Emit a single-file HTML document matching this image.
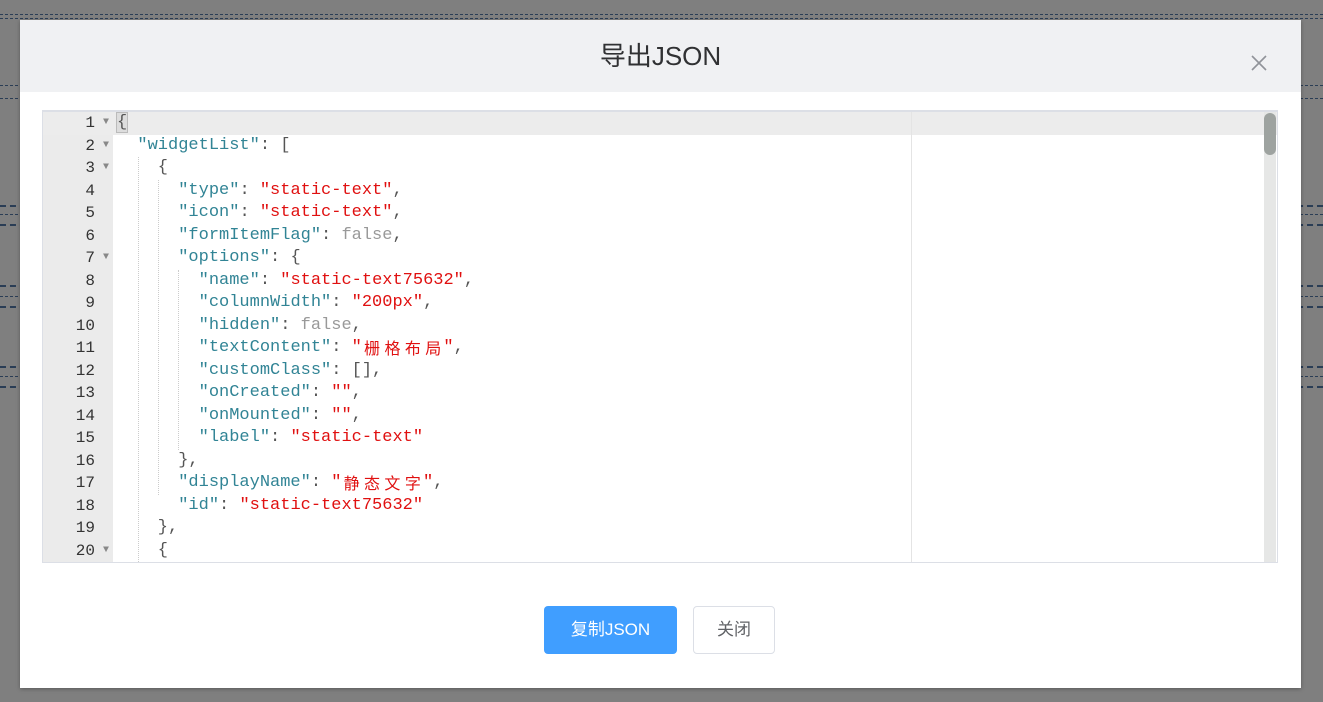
<!DOCTYPE html>
<html><head><meta charset="utf-8"><style>
*{margin:0;padding:0;box-sizing:border-box}
body{width:1323px;height:702px;overflow:hidden;background:#7f7f7f;font-family:"Liberation Sans","Noto Sans CJK SC",sans-serif;position:relative}
.dl{position:absolute;left:0;right:0;height:0;border-top:1px dashed #2a3d55}
.dlg{position:absolute;left:20px;top:20px;width:1281px;height:668px;background:#fff;box-shadow:0 1px 4px rgba(0,0,0,.3)}
.hd{height:72px;background:#f0f1f3;text-align:center;font-size:26px;color:#303133;line-height:72px;padding-top:0}
.x{position:absolute;left:1230px;top:34px;width:18px;height:18px}
.ed{position:absolute;left:22px;top:90px;width:1236px;height:453px;border:1px solid #dcdfe6;border-top:2px solid #dcdfe6;overflow:hidden;background:#fff}
.gut{position:absolute;left:0;top:0;width:70px;height:100%;background:#ebebeb}
.act{position:absolute;left:0;top:0;width:1236px;height:22.5px;background:#ececec}
.pm{position:absolute;left:868px;top:0;width:1px;height:100%;background:#e4e4e4}
.sb{position:absolute;left:1221px;top:0;width:12px;height:100%;background:#e6e7e6}
.th{position:absolute;left:1221px;top:1px;width:12px;height:42px;background:#9ea3a0;border-radius:6px}
.code{position:absolute;left:0;top:0;width:860px;font-family:"Liberation Mono","DejaVu Sans Mono",monospace;font-size:17px;color:#555}
.l{height:22.5px;white-space:pre;position:relative}
.n{position:absolute;left:0;top:0;line-height:22.5px;width:52px;text-align:right;color:#333;font-size:16px}
.f{position:absolute;left:60px;top:0;line-height:22.5px;color:#888;font-size:10px}
.t{position:absolute;left:74px;top:0;line-height:22.5px}
.k{color:#318495}.s{color:#e01010}.b{color:#999}
.c{display:inline-block;width:20.4px;text-align:center;font-family:"Noto Sans CJK SC",sans-serif;font-size:16px;line-height:21px;height:21px;vertical-align:top}
.g{position:absolute;width:0;border-left:1px dotted #ccc}
.btn{position:absolute;top:586px;height:48px;border-radius:4px;font-size:17px;text-align:center;line-height:46px}
</style></head><body>
<div class="dl" style="top:14px"></div><div class="dl" style="top:18px;border-top-style:dashed"></div>
<div class="dl" style="top:85px"></div><div class="dl" style="top:98px"></div>
<div class="dl" style="top:205px;border-top:2px dashed #2a3d55"></div><div class="dl" style="top:214px"></div><div class="dl" style="top:224px;border-top:2px dashed #2a3d55"></div>
<div class="dl" style="top:285px;border-top:2px dashed #2a3d55"></div><div class="dl" style="top:296px"></div><div class="dl" style="top:306px;border-top:2px dashed #2a3d55"></div>
<div class="dl" style="top:366px;border-top:2px dashed #2a3d55"></div><div class="dl" style="top:376px"></div><div class="dl" style="top:386px;border-top:2px dashed #2a3d55"></div>
<div class="dlg">
<div class="hd">导出JSON</div>
<svg class="x" viewBox="0 0 18 18"><path d="M2 2L16 16M16 2L2 16" stroke="#909399" stroke-width="1.6"/></svg>
<div class="ed">
<div class="gut"></div><div class="act"></div><div class="pm"></div>
<div class="g" style="left:95px;top:45px;height:405px"></div>
<div class="g" style="left:115px;top:68px;height:315px"></div>
<div class="g" style="left:135px;top:158px;height:180px"></div>
<div class="code">
<div class="l"><span class="n">1</span><span class="f">▼</span><span class="t"><span style="background:#ddd;outline:1px solid #bbb">{</span></span></div>
<div class="l"><span class="n">2</span><span class="f">▼</span><span class="t">  <span class="k">"widgetList"</span>: [</span></div>
<div class="l"><span class="n">3</span><span class="f">▼</span><span class="t">    {</span></div>
<div class="l"><span class="n">4</span><span class="t">      <span class="k">"type"</span>: <span class="s">"static-text"</span>,</span></div>
<div class="l"><span class="n">5</span><span class="t">      <span class="k">"icon"</span>: <span class="s">"static-text"</span>,</span></div>
<div class="l"><span class="n">6</span><span class="t">      <span class="k">"formItemFlag"</span>: <span class="b">false</span>,</span></div>
<div class="l"><span class="n">7</span><span class="f">▼</span><span class="t">      <span class="k">"options"</span>: {</span></div>
<div class="l"><span class="n">8</span><span class="t">        <span class="k">"name"</span>: <span class="s">"static-text75632"</span>,</span></div>
<div class="l"><span class="n">9</span><span class="t">        <span class="k">"columnWidth"</span>: <span class="s">"200px"</span>,</span></div>
<div class="l"><span class="n">10</span><span class="t">        <span class="k">"hidden"</span>: <span class="b">false</span>,</span></div>
<div class="l"><span class="n">11</span><span class="t">        <span class="k">"textContent"</span>: <span class="s">"<span class="c">栅</span><span class="c">格</span><span class="c">布</span><span class="c">局</span>"</span>,</span></div>
<div class="l"><span class="n">12</span><span class="t">        <span class="k">"customClass"</span>: [],</span></div>
<div class="l"><span class="n">13</span><span class="t">        <span class="k">"onCreated"</span>: <span class="s">""</span>,</span></div>
<div class="l"><span class="n">14</span><span class="t">        <span class="k">"onMounted"</span>: <span class="s">""</span>,</span></div>
<div class="l"><span class="n">15</span><span class="t">        <span class="k">"label"</span>: <span class="s">"static-text"</span></span></div>
<div class="l"><span class="n">16</span><span class="t">      },</span></div>
<div class="l"><span class="n">17</span><span class="t">      <span class="k">"displayName"</span>: <span class="s">"<span class="c">静</span><span class="c">态</span><span class="c">文</span><span class="c">字</span>"</span>,</span></div>
<div class="l"><span class="n">18</span><span class="t">      <span class="k">"id"</span>: <span class="s">"static-text75632"</span></span></div>
<div class="l"><span class="n">19</span><span class="t">    },</span></div>
<div class="l"><span class="n">20</span><span class="f">▼</span><span class="t">    {</span></div>
</div>
<div class="sb"></div><div class="th"></div>
</div>
<div class="btn" style="left:524px;width:133px;background:#409eff;color:#fff;line-height:48px">复制JSON</div>
<div class="btn" style="left:673px;width:82px;border:1px solid #dcdfe6;color:#606266">关闭</div>
</div>
</body></html>
